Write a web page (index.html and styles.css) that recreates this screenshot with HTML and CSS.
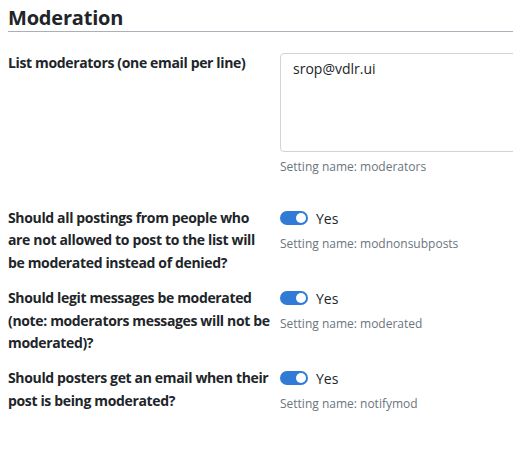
FILE: index.html
```html
<!DOCTYPE html>
<html>
<head>
<meta charset="utf-8">
<link rel="stylesheet" href="styles.css">
</head>
<body>
<div class="page">
  <h2 class="section-title">Moderation</h2>
  <div class="row row-first">
    <div class="label">List moderators (one email per line)</div>
    <div class="control">
      <div class="textarea">srop@vdlr.ui</div>
      <div class="help">Setting name: moderators</div>
    </div>
  </div>
  <div class="row">
    <div class="label">Should all postings from people who are not allowed to post to the list will be moderated instead of denied?</div>
    <div class="control">
      <div class="switch-line"><span class="switch"></span><span class="yes">Yes</span></div>
      <div class="help">Setting name: modnonsubposts</div>
    </div>
  </div>
  <div class="row">
    <div class="label">Should legit messages be moderated (note: moderators messages will not be moderated)?</div>
    <div class="control">
      <div class="switch-line"><span class="switch"></span><span class="yes">Yes</span></div>
      <div class="help">Setting name: moderated</div>
    </div>
  </div>
  <div class="row">
    <div class="label">Should posters get an email when their post is being moderated?</div>
    <div class="control">
      <div class="switch-line"><span class="switch"></span><span class="yes">Yes</span></div>
      <div class="help">Setting name: notifymod</div>
    </div>
  </div>
</div>
</body>
</html>
```
FILE: styles.css
```css
html, body {
  margin: 0;
  padding: 0;
  background: #fff;
  overflow: hidden;
}
body {
  font-family: "Open Sans", "Noto Sans", sans-serif;
  color: #212529;
  font-size: 14px;
}
.page {
  padding: 0 0 0 8px;
}
.section-title {
  margin: 0;
  padding-top: 5px;
  font-size: 20px;
  line-height: 25px;
  font-weight: 700;
  letter-spacing: -0.2px;
  border-bottom: 1px solid #a9b0b8;
  padding-bottom: 1px;
}
.row {
  display: grid;
  grid-template-columns: 272px 1fr;
  margin-top: 13px;
}
.row-first {
  margin-top: 20px;
  margin-bottom: 31px;
}
.label {
  font-weight: 700;
  font-size: 14px;
  line-height: 22.4px;
  letter-spacing: -0.35px;
  padding-right: 6px;
}
.control {
  min-width: 0;
  overflow: hidden;
}
.textarea {
  width: 250px;
  height: 99px;
  box-sizing: border-box;
  border: 1px solid #ced4da;
  border-radius: 4px;
  padding: 4px 12px;
  font-size: 14px;
  line-height: 22px;
  margin-top: 1px;
}
.help {
  margin-top: 6px;
  font-size: 12px;
  line-height: 18px;
  color: #6c757d;
}
.switch-line {
  display: flex;
  align-items: center;
  gap: 8px;
  height: 22px;
}
.switch {
  position: relative;
  width: 28px;
  height: 14px;
  border-radius: 7px;
  background: #2f7bd6;
}
.switch::after {
  content: "";
  position: absolute;
  right: 2px;
  top: 2px;
  width: 10px;
  height: 10px;
  border-radius: 50%;
  background: #fff;
}
.yes {
  font-size: 14px;
}
```
